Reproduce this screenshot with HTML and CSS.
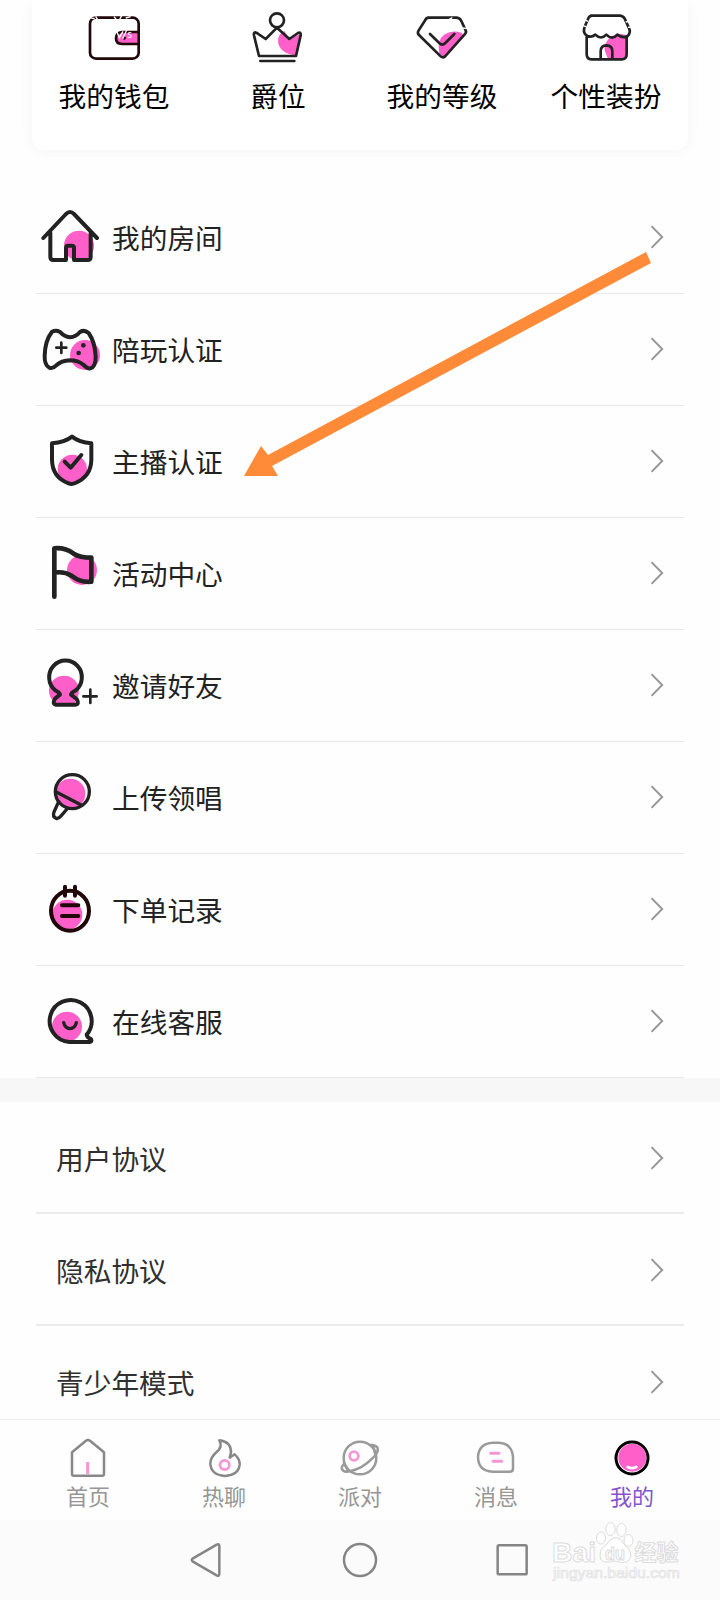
FILE: index.html
```html
<!DOCTYPE html>
<html lang="zh-CN">
<head>
<meta charset="utf-8">
<title>我的</title>
<link rel="stylesheet" href="styles.css">
</head>
<body>
<div class="screen">
  <section class="shortcuts">
    <div class="shortcut">
      <svg class="shortcut-icon" viewBox="252 0 180 216">
        <path class="pink" d="M410 99H370Q350 99 350 116Q350 132 370 132H413V99Z"/>
        <g class="wine"><rect x="270" y="53" width="146" height="123" rx="18"/><path d="M414 96H366Q348 98 348 115Q348 132 366 132H414"/></g>
        <circle cx="373" cy="114" r="5" fill="#210810"/>
        <path class="noise" d="M274 55h10M287 49l7 12M342 50l8 10M365 47l-7 13M377 54l15-4"/>
        <path class="noise" d="M350 94l8 19 11-19M380 91l-12 25"/>
        <text class="speed" x="382" y="114">s</text>
      </svg>
      <span>我的钱包</span>
    </div>
    <div class="shortcut">
      <svg class="shortcut-icon" viewBox="744 0 180 216">
        <path class="pink" d="M853 93Q832 103 834 125Q839 160 887 166L902 101L868 117Z"/>
        <g class="ink thin"><circle cx="831" cy="61" r="21"/><path d="M831 83L797 117L769 98Q760 95 762 106L777 168H888L902 106Q903 94 894 99L868 117L831 83M781 183H883"/></g>
      </svg>
      <span>爵位</span>
    </div>
    <div class="shortcut">
      <svg class="shortcut-icon" viewBox="156 0 180 216">
        <path class="pink" d="M304 98Q277 89 254 103Q230 120 238 160L249 172L312 108Z"/>
        <g class="ink thin"><path d="M204 53H290Q300 54 304 63L316 89Q321 96 314 103L258 166Q249 178 239 166L177 105Q171 99 176 91L196 60Q199 53 206 53M210 102L240 131Q248 137 256 129L283 102"/></g>
        <path class="noise" d="M262 61l15-8M305 84l16 1"/>
      </svg>
      <span>我的等级</span>
    </div>
    <div class="shortcut">
      <svg class="shortcut-icon" viewBox="648 0 180 216">
        <path class="pink" d="M752 110Q728 132 735 154L743 174H798V105Q772 97 752 110Z"/>
        <g class="ink thin"><path d="M693 47H780Q790 48 794 56L806 82Q814 97 803 108Q788 116 772 104Q757 122 739 104Q723 121 706 104Q692 115 678 105Q668 96 674 80L685 55Q688 48 697 47M680 111V163Q681 178 694 178H786Q800 177 800 162V111M722 176V153Q723 136 739 136Q757 137 757 153V176"/></g>
        <path class="noise" d="M666 76l12 4M674 59l10 5M797 66l15-3M804 82l12-1"/>
      </svg>
      <span>个性装扮</span>
    </div>
  </section>

  <section class="menu">
    <div class="row">
      <svg class="row-icon" viewBox="18 -24 228 333"><circle class="pink" cx="147" cy="167" r="45"/><g class="ink"><path d="M108 172V208" stroke="#fff"/><path d="M40 144L108 72Q120 60 132 72L201 144M61 128V201Q61 210 70 210H108V173Q108 167 114 167H125Q132 167 132 173V210H173Q182 210 182 201V128"/></g></svg>
      <span class="label">我的房间</span><svg class="chevron" viewBox="0 0 14 24"><path d="M1.5 1.2L12.2 12L1.5 22.8"/></svg>
    </div>
    <div class="row">
      <svg class="row-icon" viewBox="18 312 228 333"><circle class="pink" cx="165" cy="495" r="45"/><g class="ink"><path d="M66 425Q78 419 89 425Q104 441 120 442Q137 441 150 426Q163 418 176 429Q195 456 197 500Q197 531 181 535Q173 537 161 525Q144 511 120 511Q94 512 79 526Q68 537 58 533Q43 526 44 497Q45 452 66 425Z"/><path class="mid" d="M79 473H109M94 458V489"/></g><circle cx="160" cy="466" r="7" fill="#222"/><circle cx="146" cy="489" r="7" fill="#222"/></svg>
      <span class="label">陪玩认证</span><svg class="chevron" viewBox="0 0 14 24"><path d="M1.5 1.2L12.2 12L1.5 22.8"/></svg>
    </div>
    <div class="row">
      <svg class="row-icon" viewBox="18 -12 228 333"><circle class="pink" cx="127" cy="178" r="44"/><g class="ink"><path d="M126 80Q105 97 66 100V150Q67 202 116 220Q126 224 136 219Q183 199 184 150V100Q147 97 126 80ZM104 155L122 173L154 135"/></g></svg>
      <span class="label">主播认证</span><svg class="chevron" viewBox="0 0 14 24"><path d="M1.5 1.2L12.2 12L1.5 22.8"/></svg>
    </div>
    <div class="row">
      <svg class="row-icon" viewBox="18 324 228 333"><circle class="pink" cx="156" cy="480" r="45"/><g class="ink heavy"><path d="M73 560V415Q105 412 131 431Q150 443 184 443V515Q151 518 126 498Q102 483 74 488"/></g></svg>
      <span class="label">活动中心</span><svg class="chevron" viewBox="0 0 14 24"><path d="M1.5 1.2L12.2 12L1.5 22.8"/></svg>
    </div>
    <div class="row">
      <svg class="row-icon" viewBox="18 -30 228 333"><circle class="pink" cx="102" cy="152" r="45"/><path class="pink" d="M88 166L76 192H138L126 166Z"/><g class="ink"><path d="M90 164Q86 155 76 151A49 50 0 1 1 137 151Q127 155 123 164L140 177Q149 193 136 194H78Q66 193 75 176Z"/><path class="mid" d="M160 169H200M181 149V189"/></g></svg>
      <span class="label">邀请好友</span><svg class="chevron" viewBox="0 0 14 24"><path d="M1.5 1.2L12.2 12L1.5 22.8"/></svg>
    </div>
    <div class="row">
      <svg class="row-icon" viewBox="18 306 228 333"><circle class="pink" cx="121" cy="461" r="45"/><g class="ink"><circle class="stem" cx="127" cy="455" r="51"/><path class="stem" d="M79 456L155 496M86 485L72 516Q67 530 78 535Q86 537 92 529L111 507"/></g></svg>
      <span class="label">上传领唱</span><svg class="chevron" viewBox="0 0 14 24"><path d="M1.5 1.2L12.2 12L1.5 22.8"/></svg>
    </div>
    <div class="row">
      <svg class="row-icon" viewBox="18 -18 228 333"><circle class="pink" cx="112" cy="164" r="45"/><g class="wine bold"><ellipse cx="120" cy="152" rx="57" ry="60"/><path d="M105 80V107M135 80V107M96 136H145M96 168H145"/></g></svg>
      <span class="label">下单记录</span><svg class="chevron" viewBox="0 0 14 24"><path d="M1.5 1.2L12.2 12L1.5 22.8"/></svg>
    </div>
    <div class="row">
      <svg class="row-icon" viewBox="18 318 228 333"><circle class="pink" cx="111" cy="500" r="45"/><g class="ink"><path d="M118 546A63 63 0 1 1 170 524Q171 532 183 537Q187 546 178 546Z"/><path class="stem" d="M101 488Q105 505 120 506Q135 505 139 488"/></g></svg>
      <span class="label">在线客服</span><svg class="chevron" viewBox="0 0 14 24"><path d="M1.5 1.2L12.2 12L1.5 22.8"/></svg>
    </div>
  </section>

  <section class="menu settings">
    <div class="row"><span class="label">用户协议</span><svg class="chevron" viewBox="0 0 14 24"><path d="M1.5 1.2L12.2 12L1.5 22.8"/></svg></div>
    <div class="row"><span class="label">隐私协议</span><svg class="chevron" viewBox="0 0 14 24"><path d="M1.5 1.2L12.2 12L1.5 22.8"/></svg></div>
    <div class="row"><span class="label">青少年模式</span><svg class="chevron" viewBox="0 0 14 24"><path d="M1.5 1.2L12.2 12L1.5 22.8"/></svg></div>
  </section>

  <nav class="tabs">
    <div class="tab"><svg class="tab-icon" viewBox="192 60 144 180"><path d="M216 157L257 123Q264 117 271 123L312 157V221Q312 227 306 227H222Q216 227 216 221Z"/><path class="accent butt" d="M263 186V223" stroke-width="9"/></svg><span>首页</span></div>
    <div class="tab"><svg class="tab-icon" viewBox="600 60 144 180"><path d="M658 121Q694 125 693 158L689 173L704 163Q720 177 719 194Q716 225 675 228Q632 225 631 190Q632 171 650 156Q669 140 658 121Z"/><circle class="accent" cx="674" cy="195" r="14" stroke-width="8"/></svg><span>热聊</span></div>
    <div class="tab"><svg class="tab-icon light" viewBox="18 0 144 180"><circle cx="90" cy="114" r="49"/><path d="M120 75Q137 73 143 84Q146 99 127 115Q98 145 60 154Q40 159 35 145Q35 137 43 131M129 76L137 107M42 130L55 154"/><circle class="accent" cx="72" cy="108" r="13" stroke-width="8"/></svg><span>派对</span></div>
    <div class="tab"><svg class="tab-icon light" viewBox="336 60 144 180"><path d="M399 128H416Q456 130 459 171V206Q459 215 449 215H397Q355 213 354 171Q356 130 399 128Z"/><path class="accent" d="M392 160H417M399 184H425" stroke-width="9"/></svg><span>消息</span></div>
    <div class="tab active"><svg class="tab-icon" viewBox="744 60 144 180"><circle cx="816" cy="174" r="48" fill="#fff" stroke="#000" stroke-width="9"/><circle class="pink" cx="817" cy="173" r="42" stroke="none"/><path d="M803 201Q816 208 829 201" stroke="#fff" stroke-width="8"/></svg><span>我的</span></div>
  </nav>

  <div class="system-nav">
    <svg viewBox="558 420 120 120"><path d="M579 475L650 434Q658 430 658 439V521Q658 530 650 526L579 485Q572 480 579 475Z"/></svg>
    <svg viewBox="0 0 120 120"><circle cx="63" cy="60" r="48"/></svg>
    <svg viewBox="396 420 120 120"><rect x="413" y="436" width="87" height="87" rx="4"/></svg>
  </div>

  <svg class="pointer" viewBox="0 0 480 290"><path d="M24 266L41 236L48 245L426 42L431 53L52 256L58 266Z"/></svg>
  <svg class="watermark" viewBox="0 0 150 80">
    <g class="mark">
      <text x="12" y="51.5" textLength="44" lengthAdjust="spacingAndGlyphs" font-size="28">Bai</text>
      <path d="M60 46Q60 38 67 34Q73 25 80 29Q84 34 89 40Q93 46 88 51Q84 54 75 51Q60 55 60 46Z"/>
      <ellipse cx="61" cy="28" rx="4.5" ry="6"/><ellipse cx="70.5" cy="19" rx="4.7" ry="6.5"/><ellipse cx="81.5" cy="20" rx="4.7" ry="6.5"/><ellipse cx="88.5" cy="30.5" rx="4.5" ry="6"/>
      <text x="65" y="49.5" textLength="20" lengthAdjust="spacingAndGlyphs" font-size="18">du</text>
      <text class="cjk" x="94.5" y="50" font-size="22">经验</text>
    </g>
    <text class="site" x="13" y="68" textLength="127" lengthAdjust="spacingAndGlyphs">jingyan.baidu.com</text>
  </svg>
</div>
</body>
</html>
```

FILE: styles.css
```css
* { box-sizing: border-box; }

body {
  margin: 0;
  background: #fefefe;
  font-family: "Noto Sans CJK SC", "Noto Sans", sans-serif;
  color: #222;
}

svg { display: block; flex: none; }

.screen {
  position: relative;
  display: flex;
  flex-direction: column;
  width: 720px;
  height: 1600px;
  overflow: hidden;
}

/* Shortcut card */
.shortcuts {
  display: grid;
  grid-template-columns: repeat(4, 1fr);
  height: 150px;
  margin: 0 32px 32px;
  border-radius: 0 0 12px 12px;
  background: #fff;
  box-shadow: 0 2px 14px rgba(0, 0, 0, 0.04);
  flex: none;
}

.shortcut {
  display: flex;
  flex-direction: column;
  align-items: center;
  font-size: 27.7px;
  line-height: 46px;
  color: #000;
}

.shortcut-icon { width: 60px; height: 72px; }

.pink { fill: #ff5fc8; }

.ink, .wine {
  fill: none;
  stroke: #222;
  stroke-width: 12;
  stroke-linecap: round;
  stroke-linejoin: round;
}

.thin { stroke-width: 8; }
.mid { stroke-width: 8; }
.stem { stroke-width: 10; }
.heavy { stroke-width: 14; }
.wine { stroke: #21060a; stroke-width: 8; }
.bold { stroke-width: 12; }
.noise { fill: none; stroke: #fff; stroke-width: 4; }
.speed { fill: #fff; font-size: 30px; }

/* Menu lists */
.menu { padding: 0 36px; flex: none; }

.row {
  display: flex;
  align-items: center;
  height: 112px;
  padding: 0 20px 2px 0;
  border-bottom: 1px solid #e8e8e8;
}

.row-icon {
  width: 76px;
  height: 111px;
  align-self: flex-start;
}

.label {
  flex: 1;
  font-size: 27.7px;
  line-height: 40px;
}

.chevron { width: 14px; height: 24px; }

.chevron path {
  fill: none;
  stroke: #959595;
  stroke-width: 1.9;
}

.settings {
  height: 341px;
  overflow: hidden;
  border-top: 24px solid #f7f7f7;
}

.settings .row {
  padding: 2px 20px 0;
  border-bottom: 2px solid #ebebeb;
}

.settings .label { color: #303030; }

/* Tab bar */
.tabs {
  display: grid;
  grid-template-columns: repeat(5, 1fr);
  height: 101px;
  padding: 0 20px;
  border-top: 1px solid #ebebeb;
  background: #fefefe;
  flex: none;
}

.tab {
  display: flex;
  flex-direction: column;
  align-items: center;
  font-size: 22px;
  line-height: 31px;
  color: #969696;
}

.tab.active { color: #8455cf; }

.tab-icon {
  width: 48px;
  height: 60px;
  fill: none;
  stroke: #888;
  stroke-width: 7.5;
  stroke-linecap: round;
  stroke-linejoin: round;
}

.tab-icon.light { stroke: #9a9a9a; }
.tab-icon .accent { stroke: #f496d3; }
.tab-icon .butt { stroke-linecap: butt; }
.tab-icon .pink { fill: #ff5fc8; }

/* System navigation */
.system-nav {
  display: flex;
  gap: 113px;
  height: 80px;
  padding-left: 186px;
  align-items: center;
  background: #fbfbfb;
  flex: none;
}

.system-nav svg {
  width: 40px;
  height: 40px;
  fill: none;
  stroke: #858585;
  stroke-width: 7.5;
}

/* Annotation arrow and watermark lie over the page */
.pointer {
  position: absolute;
  left: 220px;
  top: 210px;
  width: 480px;
  height: 290px;
  fill: #ff8b38;
}

.watermark {
  position: absolute;
  left: 540px;
  top: 1510px;
  width: 150px;
  height: 80px;
  font-family: "Liberation Sans", Arial, sans-serif;
}

.mark { fill: #fff; stroke: #dcdcdc; stroke-width: 1; }
.mark text { font-weight: bold; }
.mark .cjk { font-family: "Noto Sans CJK SC", sans-serif; }

.site {
  fill: #fff;
  stroke: #e2e2e2;
  stroke-width: 0.7;
  font-size: 14px;
}
```
